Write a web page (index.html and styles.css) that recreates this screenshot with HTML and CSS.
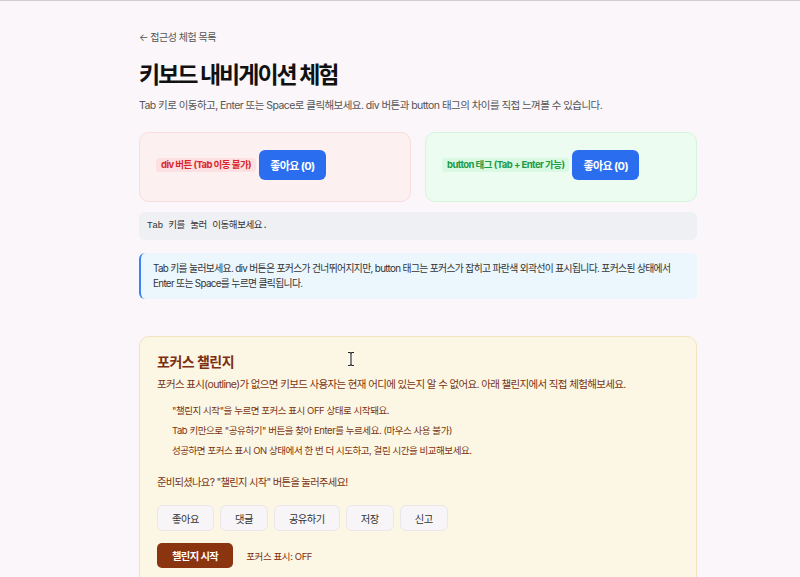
FILE: index.html
```html
<!DOCTYPE html>
<html lang="ko">
<head>
  <meta charset="UTF-8" />
  <meta name="viewport" content="width=device-width, initial-scale=1.0"/>
  <title>키보드 내비게이션 체험</title>
  <link rel="stylesheet" href="styles.css">
</head>
<body>

  <div class="page">
    <a class="back" href="#">← 접근성 체험 목록</a>
    <h1>키보드 내비게이션 체험</h1>
    <p class="lead">Tab 키로 이동하고, Enter 또는 Space로 클릭해보세요. div 버튼과 button 태그의 차이를 직접 느껴볼 수 있습니다.</p>

    <div class="compare">
      <div class="demo demo-bad">
        <span class="tag tag-bad">div 버튼 (Tab 이동 불가)</span>
        <div class="like">좋아요 (0)</div>
      </div>
      <div class="demo demo-good">
        <span class="tag tag-good">button 태그 (Tab + Enter 가능)</span>
        <button class="like">좋아요 (0)</button>
      </div>
    </div>

    <div class="status">Tab 키를 눌러 이동해보세요.</div>

    <div class="note">
      Tab 키를 눌러보세요. div 버튼은 포커스가 건너뛰어지지만, button 태그는 포커스가 잡히고 파란색 외곽선이 표시됩니다. 포커스된 상태에서 Enter 또는 Space를 누르면 클릭됩니다.
    </div>

    <section class="challenge">
      <h2>포커스 챌린지</h2>
      <p class="desc">포커스 표시(outline)가 없으면 키보드 사용자는 현재 어디에 있는지 알 수 없어요. 아래 챌린지에서 직접 체험해보세요.</p>
      <ol class="steps">
        <li>"챌린지 시작"을 누르면 포커스 표시 OFF 상태로 시작돼요.</li>
        <li>Tab 키만으로 "공유하기" 버튼을 찾아 Enter를 누르세요. (마우스 사용 불가)</li>
        <li>성공하면 포커스 표시 ON 상태에서 한 번 더 시도하고, 걸린 시간을 비교해보세요.</li>
      </ol>
      <p class="ready">준비되셨나요? "챌린지 시작" 버튼을 눌러주세요!</p>

      <div class="actions">
        <button class="act">좋아요</button>
        <button class="act">댓글</button>
        <button class="act">공유하기</button>
        <button class="act">저장</button>
        <button class="act">신고</button>
      </div>

      <div class="controls">
        <button class="start">챌린지 시작</button>
        <span class="mode">포커스 표시: OFF</span>
      </div>

      <!-- text cursor resting over the card -->
      <svg class="caret" width="8" height="16" viewBox="0 0 8 16">
        <path d="M1 1.5h2l1 1 1-1h2M4 2.5v11M1 14.5h2l1-1 1 1h2" fill="none" stroke="#fff" stroke-width="2.6"/>
        <path d="M1 1.5h2l1 1 1-1h2M4 2.5v11M1 14.5h2l1-1 1 1h2" fill="none" stroke="#222" stroke-width="1.1"/>
      </svg>
    </section>
  </div>

</body>
</html>
```

FILE: styles.css
```css
body {
  margin: 0;
  background: #faf6fa;
  border-top: 1px solid #cfcdd2;
  font-family: Inter, "Noto Sans CJK KR", sans-serif;
  color: #333;
}
.page {
  width: 558px;
  margin-left: 139px;
  padding-top: 29px;
}
.back {
  display: block;
  font-size: 10px;
  line-height: 14px;
  color: #555;
  text-decoration: none;
  letter-spacing: -0.5px;
}
h1 {
  margin: 16px 0 0;
  font-size: 23px;
  line-height: 30px;
  font-weight: bold;
  color: #111;
  letter-spacing: -2px;
}
.lead {
  margin: 8px 0 0;
  font-size: 10.5px;
  line-height: 16px;
  color: #555;
  letter-spacing: -0.55px;
}
.compare {
  display: flex;
  gap: 14px;
  margin-top: 18px;
}
.demo {
  flex: 1;
  display: flex;
  align-items: center;
  gap: 3px;
  padding: 17px 16px 21px;
  border-radius: 10px;
  border: 1px solid;
}
.demo-bad {
  background: #fcf0f1;
  border-color: #f9dcdc;
}
.demo-good {
  background: #edfcf1;
  border-color: #d4f5dc;
}
.tag {
  font-size: 9.5px;
  font-weight: bold;
  line-height: 14px;
  padding: 0 5px;
  border-radius: 3px;
  letter-spacing: -0.55px;
}
.tag-bad {
  background: #fde1e2;
  color: #d9262b;
}
.tag-good {
  background: #d9f9e3;
  color: #1d9a47;
}
.like {
  display: flex;
  align-items: center;
  height: 30px;
  padding: 0 11px;
  border: none;
  border-radius: 6px;
  background: #2b6def;
  color: #fff;
  font-family: inherit;
  font-size: 11px;
  font-weight: bold;
  letter-spacing: -0.6px;
}
.status {
  margin-top: 10px;
  height: 28px;
  line-height: 28px;
  padding: 0 8px;
  border-radius: 6px;
  background: #eef0f3;
  font-family: "Liberation Mono", "Noto Sans CJK KR", monospace;
  font-size: 9.5px;
  letter-spacing: -0.4px;
  color: #333;
}
.note {
  margin-top: 13px;
  padding: 8px 12px;
  border-left: 2px solid #3b82f6;
  border-radius: 6px;
  background: #ebf7fd;
  font-size: 9.8px;
  line-height: 15px;
  color: #333;
  letter-spacing: -0.65px;
}
.challenge {
  position: relative;
  margin-top: 37px;
  padding: 15px 17px 20px;
  border: 1px solid #f3e4c0;
  border-radius: 10px;
  background: #fcf7e4;
  color: #7a3411;
}
.challenge h2 {
  margin: 0;
  font-size: 14px;
  line-height: 20px;
  font-weight: bold;
  color: #7c2d12;
  letter-spacing: -0.5px;
}
.desc {
  margin: 5px 0 0;
  font-size: 10.5px;
  line-height: 16px;
  letter-spacing: -0.65px;
}
.steps {
  list-style: none;
  margin: 8px 0 0;
  padding-left: 15px;
  font-size: 9.5px;
  line-height: 20px;
  letter-spacing: -0.45px;
}
.ready {
  margin: 13px 0 0;
  font-size: 10.3px;
  line-height: 16px;
  letter-spacing: -0.7px;
}
.actions {
  display: flex;
  gap: 6px;
  margin-top: 15px;
}
.act {
  height: 26px;
  padding: 0 14px;
  border: 1px solid #ece6e8;
  border-radius: 6px;
  background: #f8f5f8;
  color: #333;
  font-family: inherit;
  font-size: 10.3px;
  letter-spacing: -0.5px;
}
.controls {
  display: flex;
  align-items: center;
  gap: 13px;
  margin-top: 12px;
}
.start {
  height: 25px;
  padding: 0 15px;
  border: none;
  border-radius: 5px;
  background: #8a3410;
  color: #fff;
  font-family: inherit;
  font-size: 10.3px;
  font-weight: bold;
  letter-spacing: -0.6px;
}
.mode {
  font-size: 9.5px;
  color: #7c2d12;
  letter-spacing: -0.4px;
}
.caret {
  position: absolute;
  left: 207px;
  top: 14px;
}
```
